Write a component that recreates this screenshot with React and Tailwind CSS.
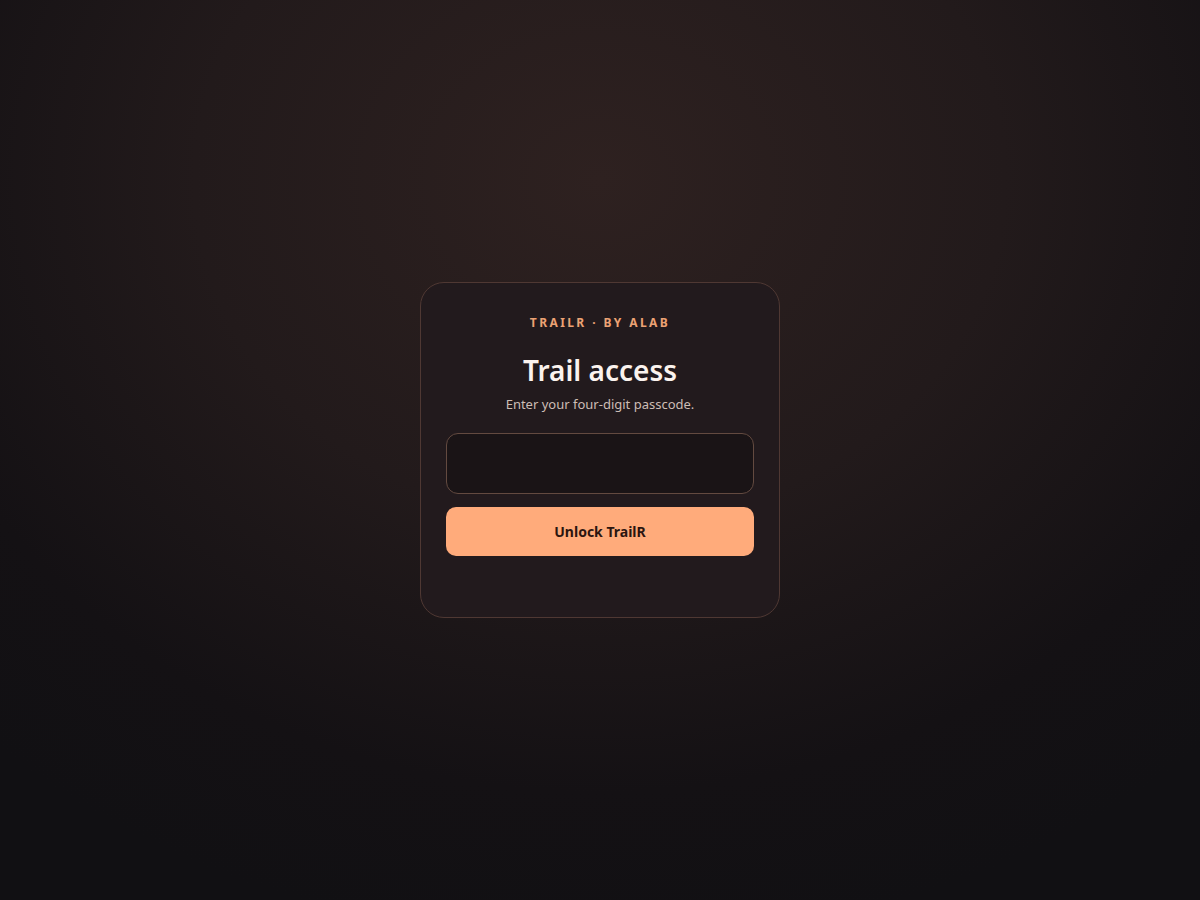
export default function App() {
  return (
    <div
      className="min-h-screen w-full flex items-center justify-center bg-[radial-gradient(ellipse_75%_85%_at_50%_20%,#2e2120_0%,#221a1b_45%,#141114_80%,#111013_100%)]"
      style={{ fontFamily: '"Noto Sans", "Open Sans", sans-serif' }}
    >
      <div className="w-[360px] rounded-[24px] border border-[#4f3833] bg-[#221a1d] px-[25px] pt-[32px] pb-[61px] flex flex-col items-center">
        <div className="text-[12px] leading-[16px] font-bold tracking-[0.2em] text-[#eca274]">
          TRAILR · BY ALAB
        </div>
        <h1 className="mt-[22px] text-[28px] leading-[34px] font-semibold text-[#fbf3ee]">
          Trail access
        </h1>
        <p className="mt-[8px] text-[13px] leading-[18px] text-[#cdbdb5]">
          Enter your four-digit passcode.
        </p>
        <input
          type="password"
          inputMode="numeric"
          maxLength={4}
          className="mt-[20px] w-full h-[61px] rounded-[12px] border border-[#634a40] bg-[#1a1416] text-center text-[#fbf3ee] text-[24px] outline-none"
        />
        <button className="mt-[13px] w-full h-[49px] rounded-[10px] bg-[#ffab7b] text-[14px] font-bold text-[#2b1510]">
          Unlock TrailR
        </button>
      </div>
    </div>
  );
}
